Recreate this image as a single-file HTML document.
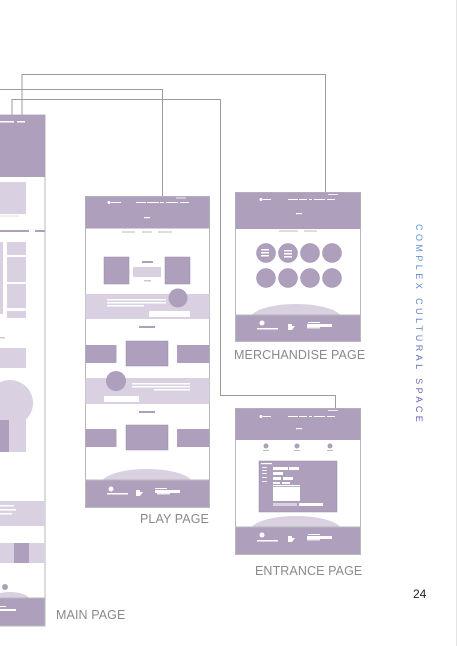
<!DOCTYPE html>
<html><head><meta charset="utf-8"><style>
html,body{margin:0;padding:0;background:#fff;}
body{width:457px;height:646px;position:relative;overflow:hidden;font-family:"Liberation Sans",sans-serif;}
.lbl{position:absolute;color:#8a8a8a;font-size:12.5px;letter-spacing:0.1px;}
</style></head><body>
<svg width="457" height="646" style="position:absolute;left:0;top:0">
<line x1="456.5" y1="0" x2="456.5" y2="646" stroke="#e4e4e4" stroke-width="1"/>
<g fill="none" stroke="#9c9c9c" stroke-width="1">
<polyline points="22,115 22,74.5 325.5,74.5 325.5,192"/>
<polyline points="0,89.5 162.5,89.5 162.5,196"/>
<polyline points="12,115 12,99.5 220.5,99.5 220.5,395.5 335.5,395.5 335.5,408"/>
</g>
<g>
<rect x="-2" y="115" width="47" height="511" fill="#fff" stroke="#b8b8b8"/>
<rect x="-2" y="115" width="47" height="62" fill="#ae9fbd"/>
<rect x="0" y="121" width="14" height="1.5" fill="#fff"/><rect x="17" y="121" width="8" height="1.5" fill="#fff"/>
<rect x="0" y="182" width="26" height="32" fill="#d9d0e1"/>
<rect x="0" y="215" width="19" height="2" fill="#eee"/>
<rect x="0" y="230" width="29" height="2" fill="#ae9fbd"/><rect x="35" y="230" width="10" height="2" fill="#ae9fbd"/>
<rect x="0" y="242" width="3" height="72" fill="#d9d0e1"/>
<rect x="7" y="242" width="19" height="13" fill="#d9d0e1"/>
<rect x="7" y="257" width="19" height="25" fill="#d9d0e1"/>
<rect x="7" y="284" width="19" height="24" fill="#d9d0e1"/>
<rect x="7" y="311" width="19" height="7" fill="#d9d0e1"/>
<rect x="0" y="337" width="5" height="1.5" fill="#ccc"/>
<rect x="0" y="348" width="26" height="20" fill="#d9d0e1"/>
<circle cx="10" cy="403" r="23" fill="#d9d0e1"/>
<rect x="0" y="410" width="26" height="42" fill="#d9d0e1"/>
<rect x="0" y="420" width="9" height="32" fill="#ae9fbd"/>
<rect x="0" y="501" width="45" height="25" fill="#d9d0e1"/>
<rect x="0" y="505" width="14" height="1.5" fill="#fff"/><rect x="0" y="509" width="16" height="1.5" fill="#fff"/><rect x="0" y="513" width="12" height="1.5" fill="#fff"/>
<rect x="0" y="543" width="45" height="20" fill="#d9d0e1"/>
<rect x="14" y="543" width="15" height="20" fill="#ae9fbd"/>
<ellipse cx="10" cy="600" rx="20" ry="8" fill="#d9d0e1"/>
<circle cx="5" cy="587" r="3" fill="#ae9fbd"/>
<rect x="-2" y="598" width="47" height="28" fill="#ae9fbd" stroke="#b8b8b8"/>
<rect x="0" y="606" width="6" height="1" fill="#fff"/><rect x="0" y="609" width="16" height="2" fill="#fff"/>
</g>
<g>
<rect x="85.5" y="196.5" width="124" height="311" fill="#fff" stroke="#b8b8b8"/>
<rect x="85.5" y="196.5" width="124" height="32" fill="#ae9fbd"/>
<circle cx="109" cy="202.5" r="1.5" fill="#fff"/><rect x="111" y="202" width="10" height="1" fill="#fff"/>
<rect x="136" y="202" width="10" height="1" fill="#fff"/><rect x="147" y="202" width="12" height="1" fill="#fff"/><rect x="160" y="202" width="4" height="1" fill="#fff"/><rect x="166" y="202" width="12" height="1" fill="#fff"/><rect x="180" y="202" width="9" height="1" fill="#fff"/>
<rect x="176" y="197.5" width="10" height="1" fill="#eee"/>
<rect x="144" y="217" width="6" height="1.2" fill="#fff"/>
<rect x="122" y="231.5" width="13" height="1" fill="#bbb"/><rect x="142" y="231.5" width="10" height="1" fill="#bbb"/><rect x="158" y="231.5" width="14" height="1" fill="#bbb"/>
<rect x="104" y="257" width="25" height="27" fill="#ae9fbd" stroke="#9a8bab" stroke-width=".5"/>
<rect x="165" y="257" width="25" height="27" fill="#ae9fbd" stroke="#9a8bab" stroke-width=".5"/>
<rect x="142" y="261" width="11" height="2" fill="#ae9fbd"/>
<rect x="133" y="267" width="28" height="10" fill="#d9d0e1"/>
<rect x="144" y="280" width="7" height="1.5" fill="#ccc"/>
<rect x="85.5" y="294" width="124" height="25" fill="#d9d0e1"/>
<circle cx="178" cy="298" r="9.5" fill="#ae9fbd"/>
<rect x="107" y="299" width="59" height="1.5" fill="#fff"/><rect x="107" y="302" width="59" height="1.5" fill="#fff"/><rect x="107" y="305" width="37" height="1.5" fill="#fff"/>
<rect x="149" y="311" width="41" height="6" fill="#fff"/>
<rect x="139" y="326" width="16" height="2" fill="#ae9fbd"/>
<rect x="85.5" y="345" width="31" height="18" fill="#ae9fbd"/>
<rect x="126" y="341" width="42" height="25" fill="#ae9fbd" stroke="#9a8bab" stroke-width=".5"/>
<rect x="177" y="345" width="32.5" height="18" fill="#ae9fbd"/>
<rect x="85.5" y="378" width="124" height="26" fill="#d9d0e1"/>
<circle cx="116" cy="381" r="10" fill="#ae9fbd"/>
<rect x="132" y="383" width="58" height="1.5" fill="#fff"/><rect x="132" y="386" width="58" height="1.5" fill="#fff"/><rect x="154" y="389" width="36" height="1.5" fill="#fff"/>
<rect x="104" y="396" width="35" height="6" fill="#fff"/>
<rect x="139" y="411" width="16" height="2" fill="#ae9fbd"/>
<rect x="85.5" y="429" width="31" height="18" fill="#ae9fbd"/>
<rect x="126" y="425" width="42" height="25" fill="#ae9fbd" stroke="#9a8bab" stroke-width=".5"/>
<rect x="177" y="429" width="32.5" height="18" fill="#ae9fbd"/>
<ellipse cx="147" cy="484" rx="46" ry="15" fill="#d9d0e1"/>
<rect x="85.5" y="480" width="124" height="27.5" fill="#ae9fbd" stroke="#b8b8b8"/>
<circle cx="111" cy="489" r="2.5" fill="#fff"/><rect x="107" y="493" width="21" height="1.5" fill="#fff"/>
<path d="M136,490h4v2h3l-3,4h-4z" fill="#fff"/>
<rect x="155" y="488" width="12" height="1" fill="#fff"/><rect x="155" y="490" width="25" height="3" fill="#fff"/><rect x="157" y="493" width="13" height="1.5" fill="#eee"/>
</g>
<g>
<rect x="235.5" y="192.5" width="125" height="149" fill="#fff" stroke="#b8b8b8"/>
<rect x="235.5" y="192.5" width="125" height="36.5" fill="#ae9fbd"/>
<circle cx="261" cy="199.5" r="1.5" fill="#fff"/><rect x="263" y="199" width="8" height="1" fill="#fff"/>
<rect x="288" y="199" width="10" height="1" fill="#fff"/><rect x="299" y="199" width="8" height="1" fill="#fff"/><rect x="309" y="199" width="3" height="1" fill="#fff"/><rect x="314" y="199" width="11" height="1" fill="#fff"/><rect x="327" y="199" width="8" height="1" fill="#fff"/>
<rect x="328" y="194" width="10" height="1" fill="#eee"/>
<rect x="296" y="213" width="6" height="1.2" fill="#fff"/>
<rect x="279" y="230.5" width="19" height="1" fill="#bbb"/><rect x="304" y="230.5" width="13" height="1" fill="#bbb"/>
<g fill="#ae9fbd" stroke="#9a8bab" stroke-width=".5">
<circle cx="266" cy="253" r="9.5"/><circle cx="288" cy="253" r="9.5"/><circle cx="310" cy="253" r="9.5"/><circle cx="332" cy="253" r="9.5"/>
<circle cx="266" cy="278" r="9.5"/><circle cx="288" cy="278" r="9.5"/><circle cx="310" cy="278" r="9.5"/><circle cx="332" cy="278" r="9.5"/>
</g>
<rect x="261" y="249" width="8" height="1.5" fill="#fff"/><rect x="261" y="252" width="8" height="1.5" fill="#fff"/><rect x="261" y="255" width="8" height="1.5" fill="#fff"/>
<rect x="284" y="250" width="8" height="1.5" fill="#fff"/><rect x="284" y="253" width="8" height="1.5" fill="#fff"/><rect x="284" y="256" width="8" height="1.5" fill="#fff"/>
<ellipse cx="296" cy="319" rx="46" ry="15" fill="#d9d0e1"/>
<rect x="235.5" y="315" width="125" height="26.5" fill="#ae9fbd" stroke="#b8b8b8"/>
<circle cx="262" cy="323" r="2.5" fill="#fff"/><rect x="257" y="328" width="21" height="1.5" fill="#fff"/>
<path d="M288,324h4v2h3l-3,4h-4z" fill="#fff"/>
<rect x="308" y="322" width="12" height="1" fill="#fff"/><rect x="307" y="324" width="25" height="3" fill="#fff"/><rect x="307" y="327" width="13" height="1.5" fill="#eee"/>
</g>
<g>
<rect x="235.5" y="408.5" width="125" height="146" fill="#fff" stroke="#b8b8b8"/>
<rect x="235.5" y="408.5" width="125" height="31.5" fill="#ae9fbd"/>
<circle cx="261" cy="416.5" r="1.5" fill="#fff"/><rect x="263" y="416" width="8" height="1" fill="#fff"/>
<rect x="288" y="416" width="10" height="1" fill="#fff"/><rect x="299" y="416" width="8" height="1" fill="#fff"/><rect x="309" y="416" width="3" height="1" fill="#fff"/><rect x="314" y="416" width="11" height="1" fill="#fff"/><rect x="327" y="416" width="8" height="1" fill="#fff"/>
<rect x="328" y="410" width="10" height="1" fill="#eee"/>
<rect x="296" y="428" width="6" height="1.2" fill="#fff"/>
<circle cx="266" cy="446" r="2.5" fill="#ae9fbd"/><rect x="263" y="450" width="6" height="1" fill="#bbb"/>
<circle cx="297" cy="446" r="2.5" fill="#ae9fbd"/><rect x="294" y="450" width="6" height="1" fill="#bbb"/>
<circle cx="330" cy="446" r="2.5" fill="#ae9fbd"/><rect x="327" y="450" width="6" height="1" fill="#bbb"/>
<rect x="259" y="461" width="78" height="51" fill="#ae9fbd" stroke="#9a8bab" stroke-width=".5"/>
<rect x="261" y="463" width="11" height="1.2" fill="#fff"/>
<rect x="273" y="467" width="15" height="3" fill="#fff"/><rect x="289" y="467" width="10" height="3" fill="#fff"/>
<rect x="273" y="472" width="10" height="3" fill="#fff"/>
<rect x="273" y="477" width="8" height="3" fill="#fff"/><rect x="283" y="477" width="10" height="3" fill="#fff"/>
<rect x="273" y="482" width="7" height="2" fill="#fff"/><rect x="282" y="482" width="8" height="2" fill="#fff"/>
<rect x="273" y="485" width="27" height="1.2" fill="#fff"/>
<rect x="273" y="487" width="27" height="14" fill="#fff"/>
<rect x="273" y="503" width="24" height="3" fill="#d9d0e1"/><rect x="299" y="503" width="24" height="3" fill="#fff"/>
<rect x="262" y="467" width="5" height="1" fill="#eee"/><rect x="262" y="470" width="5" height="1" fill="#eee"/><rect x="262" y="473" width="5" height="1" fill="#eee"/><rect x="262" y="477" width="5" height="1" fill="#eee"/><rect x="262" y="481" width="5" height="1" fill="#eee"/>
<ellipse cx="296" cy="531" rx="46" ry="15" fill="#d9d0e1"/>
<rect x="235.5" y="527" width="125" height="27.5" fill="#ae9fbd" stroke="#b8b8b8"/>
<circle cx="262" cy="535" r="2.5" fill="#fff"/><rect x="257" y="540" width="21" height="1.5" fill="#fff"/>
<path d="M288,536h4v2h3l-3,4h-4z" fill="#fff"/>
<rect x="308" y="534" width="12" height="1" fill="#fff"/><rect x="307" y="536" width="25" height="3" fill="#fff"/><rect x="307" y="539" width="13" height="1.5" fill="#eee"/>
</g>
<defs><linearGradient id="g" x1="0" y1="0" x2="1" y2="0"><stop offset="0" stop-color="#5a9ad6"/><stop offset="1" stop-color="#6a5aa8"/></linearGradient></defs>
<text transform="translate(416,224) rotate(90)" font-family="Liberation Sans, sans-serif" font-size="9" letter-spacing="3.45" fill="url(#g)">COMPLEX CULTURAL SPACE</text>
</svg>
<div class="lbl" style="left:140px;top:512px;">PLAY PAGE</div>
<div class="lbl" style="left:234px;top:348px;">MERCHANDISE PAGE</div>
<div class="lbl" style="left:255px;top:564px;">ENTRANCE PAGE</div>
<div class="lbl" style="left:56px;top:608px;">MAIN PAGE</div>
<div style="position:absolute;left:413px;top:587px;font-size:12px;color:#222;">24</div>
</body></html>
